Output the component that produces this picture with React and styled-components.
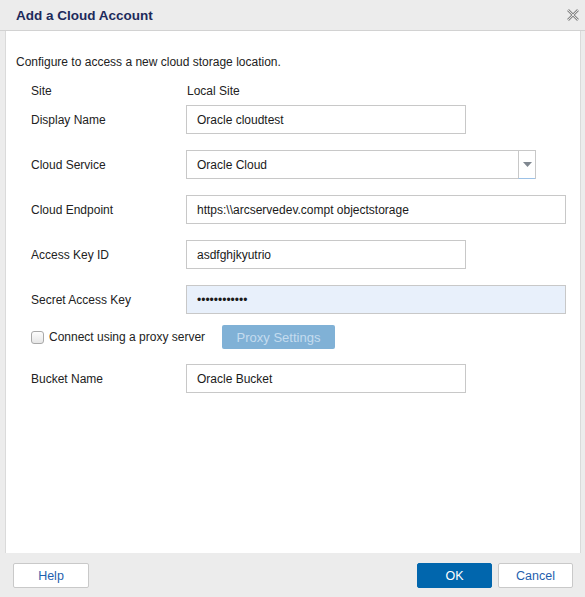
import styled, { createGlobalStyle } from "styled-components";

const GlobalStyle = createGlobalStyle`
    html, body {
        margin: 0;
        padding: 0;
        background: #ececec;
    }
    * {
        box-sizing: border-box;
    }
`;

const fields = [
    { label: "Display Name", value: "Oracle cloudtest", width: 280, top: 5 },
    { label: "Cloud Service", value: "Oracle Cloud", width: 350, top: 16, select: true },
    { label: "Cloud Endpoint", value: "https:\\\\arcservedev.compt objectstorage", width: 380, top: 16 },
    { label: "Access Key ID", value: "asdfghjkyutrio", width: 280, top: 16 },
    { label: "Secret Access Key", value: "••••••••••••", width: 380, top: 16, secret: true },
];

const CloseIcon = () => (
    <svg width="12" height="12" viewBox="0 0 12 12">
        <path d="M1 1 L11 11 M11 1 L1 11" stroke="#8a8a8a" strokeWidth="2.6" />
        <path d="M1 1 L11 11 M11 1 L1 11" stroke="#ededed" strokeWidth="0.9" />
    </svg>
);

const Field = ({ field }) => (
    <Row $top={field.top}>
        <Label>{field.label}</Label>
        {field.select ? (
            <Select $width={field.width}>
                <SelectValue>{field.value}</SelectValue>
                <Arrow>
                    <svg width="9" height="5" viewBox="0 0 9 5">
                        <path d="M0 0 H9 L4.5 5 Z" fill="#7f8790" />
                    </svg>
                </Arrow>
            </Select>
        ) : (
            <Input $width={field.width} $secret={field.secret}>
                {field.value}
            </Input>
        )}
    </Row>
);

const App = () => {
    return (
        <Dialog>
            <GlobalStyle />
            <Header>
                <Title>Add a Cloud Account</Title>
                <Close>
                    <CloseIcon />
                </Close>
            </Header>
            <Body>
                <Intro>Configure to access a new cloud storage location.</Intro>
                <SiteRow>
                    <Label>Site</Label>
                    <SiteValue>Local Site</SiteValue>
                </SiteRow>
                {fields.map((f) => (
                    <Field key={f.label} field={f} />
                ))}
                <ProxyRow>
                    <CheckLabel>
                        <Checkbox />
                        Connect using a proxy server
                    </CheckLabel>
                    <ProxyButton>Proxy Settings</ProxyButton>
                </ProxyRow>
                <Field field={{ label: "Bucket Name", value: "Oracle Bucket", width: 280, top: 15 }} />
            </Body>
            <Footer>
                <Button>Help</Button>
                <Spacer />
                <Button $primary>OK</Button>
                <Button>Cancel</Button>
            </Footer>
        </Dialog>
    );
};

export default App;

const Dialog = styled.div`
    width: 585px;
    height: 597px;
    display: flex;
    flex-direction: column;
    background: #ececec;
    font-family: "Liberation Sans", Arial, sans-serif;
    font-size: 12px;
    color: #222;
`;

const Header = styled.div`
    height: 31px;
    flex-shrink: 0;
    display: flex;
    align-items: center;
    padding: 0 6px 0 16px;
    border-bottom: 1px solid #d2d2d2;
`;

const Title = styled.div`
    flex: 1;
    font-size: 13.5px;
    font-weight: bold;
    color: #1d2a5b;
`;

const Close = styled.div`
    display: flex;
    align-items: center;
    padding-bottom: 1px;
`;

const Body = styled.div`
    flex: 1;
    margin: 0 4px 0 5px;
    background: #fff;
    border-left: 1px solid #dadada;
    border-right: 1px solid #dadada;
    padding: 24px 0 0 10px;
    display: flex;
    flex-direction: column;
`;

const Intro = styled.div`
    line-height: 14px;
    color: #222;
`;

const SiteRow = styled.div`
    display: flex;
    align-items: center;
    height: 20px;
    margin-top: 11px;
    padding-left: 15px;
`;

const Label = styled.div`
    width: 155px;
    flex-shrink: 0;
    color: #222;
    padding-top: 1px;
`;

const SiteValue = styled.div`
    padding-left: 1px;
    padding-top: 1px;
`;

const Row = styled.div`
    display: flex;
    align-items: center;
    padding-left: 15px;
    margin-top: ${(props) => props.$top}px;
`;

const Input = styled.div`
    width: ${(props) => props.$width}px;
    height: 29px;
    display: flex;
    align-items: center;
    padding: 1px 10px 0;
    border: 1px solid #c8c8c8;
    background: ${(props) => (props.$secret ? "#e8f0fb" : "#fff")};
    color: #1a1a1a;
    font-size: 12px;
`;

const Select = styled.div`
    width: ${(props) => props.$width}px;
    height: 29px;
    display: flex;
    border: 1px solid #c8c8c8;
    background: #fff;
`;

const SelectValue = styled.div`
    flex: 1;
    display: flex;
    align-items: center;
    padding: 1px 10px 0;
    color: #1a1a1a;
`;

const Arrow = styled.div`
    width: 17px;
    display: flex;
    align-items: center;
    justify-content: center;
    border-left: 1px solid #c8c8c8;
    border-bottom: 1px solid #9cc1e6;
    margin-bottom: -1px;
`;

const ProxyRow = styled.div`
    display: flex;
    align-items: center;
    margin-top: 11px;
    height: 24px;
    padding-left: 15px;
`;

const CheckLabel = styled.label`
    display: flex;
    align-items: center;
    gap: 5px;
    width: 191px;
    color: #222;
`;

const Checkbox = styled.span`
    width: 13px;
    height: 13px;
    border: 1px solid #a9a9a9;
    border-radius: 3px;
    background: linear-gradient(#fdfdfd, #e6e6e6);
`;

const ProxyButton = styled.div`
    width: 113px;
    height: 24px;
    display: flex;
    align-items: center;
    justify-content: center;
    background: #80b1d6;
    border-radius: 2px;
    color: #c4dcef;
    font-size: 13px;
`;

const Footer = styled.div`
    height: 44px;
    flex-shrink: 0;
    display: flex;
    align-items: flex-start;
    padding: 10px 12px 0 13px;
    gap: 6px;
`;

const Spacer = styled.div`
    flex: 1;
`;

const Button = styled.div`
    width: 75px;
    height: 25px;
    display: flex;
    align-items: center;
    justify-content: center;
    border-radius: 2px;
    font-size: 12.5px;
    border: 1px solid ${(props) => (props.$primary ? "#0166ad" : "#c9c9c9")};
    background: ${(props) => (props.$primary ? "#0166ad" : "#fff")};
    color: ${(props) => (props.$primary ? "#fff" : "#1f5fae")};

    &:first-child {
        width: 76px;
    }
`;
